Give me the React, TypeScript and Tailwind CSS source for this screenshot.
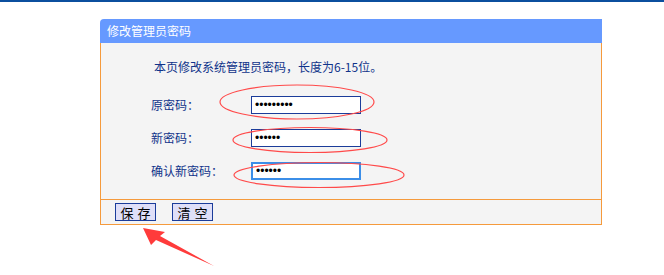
import React from "react";

const rows = [
  { label: "原密码：", value: "123456789", focused: false },
  { label: "新密码：", value: "123456", focused: false },
  { label: "确认新密码：", value: "123456", focused: true },
];

const App = () => {
  return (
    <div
      className="relative w-[664px] h-[275px] bg-white overflow-hidden"
      style={{ fontFamily: '"Noto Sans CJK SC", "Liberation Sans", sans-serif' }}
    >
      <div className="h-[2px] bg-[#0b4f9e]" />

      {/* Panel */}
      <div className="ml-[100px] mt-[17px] w-[502px]">
        <div className="h-[24px] bg-[#6699ff] rounded-tl-[4px] pl-[7px] flex items-center text-white text-[12px]">
          修改管理员密码
        </div>

        <div className="h-[156px] bg-[#f4f4f4] border-x border-[#f59a3c] pt-[16px]">
          <div className="pl-[53px] text-[12px] leading-[16px] text-[#10338a]">
            本页修改系统管理员密码，长度为6-15位。
          </div>
          <div className="mt-[21px] flex flex-col gap-[15px]">
            {rows.map((row) => (
              <div key={row.label} className="flex items-center h-[18px]">
                <span className="pl-[50px] w-[150px] text-[12px] text-[#10338a]">
                  {row.label}
                </span>
                <input
                  type="password"
                  readOnly
                  defaultValue={row.value}
                  className={`w-[110px] h-[18px] bg-white px-[3px] text-[12px] text-black outline-none ${
                    row.focused
                      ? "border-2 border-[#3b8ee8]"
                      : "border border-[#1b3c9a]"
                  }`}
                  style={{ fontFamily: '"Liberation Sans", sans-serif' }}
                />
              </div>
            ))}
          </div>
        </div>

        <div className="h-[26px] bg-[#f4f4f4] border border-[#f59a3c] pl-[14px] flex items-center gap-[16px]">
          <button className="w-[41px] h-[18px] bg-[#dfdff8] border border-[#1b3c9a] text-[13px] leading-none text-black tracking-[4px] pl-[4px]">
            保存
          </button>
          <button className="w-[41px] h-[18px] bg-[#dfdff8] border border-[#1b3c9a] text-[13px] leading-none text-black tracking-[4px] pl-[4px]">
            清空
          </button>
        </div>
      </div>

      {/* Annotations */}
      <svg
        className="absolute inset-0 pointer-events-none"
        width="664"
        height="275"
        viewBox="0 0 664 275"
      >
        <ellipse cx="297" cy="102" rx="77" ry="17" fill="none" stroke="#ff4a4a" strokeWidth="1.2" />
        <ellipse cx="310" cy="140" rx="77" ry="12.5" fill="none" stroke="#ff4a4a" strokeWidth="1.2" />
        <ellipse cx="319" cy="175" rx="85" ry="12.5" fill="none" stroke="#ff4a4a" strokeWidth="1.2" />
        <polygon
          points="143,228 165,232 160,236 214,266 156,240 151,245"
          fill="#ff3b3b"
        />
      </svg>
    </div>
  );
};

export default App;
